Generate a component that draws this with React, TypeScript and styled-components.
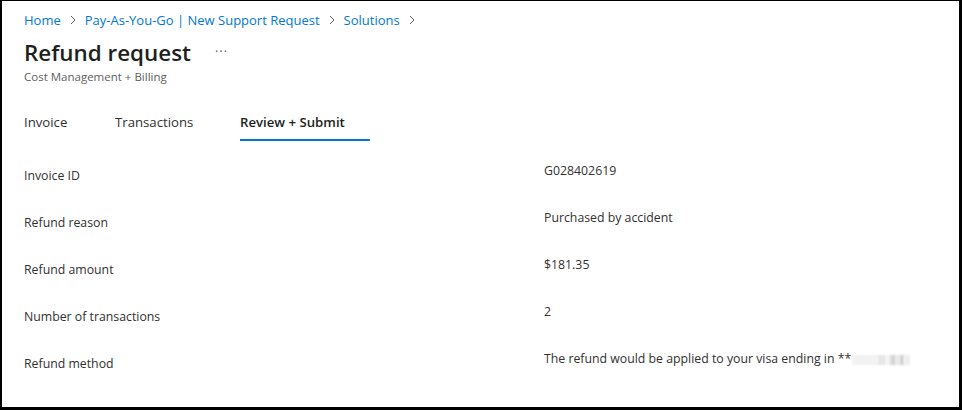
import React from "react";
import styled, { createGlobalStyle } from "styled-components";

const Global = createGlobalStyle`
  html, body { margin: 0; padding: 0; background: #fff; }
  body { font-family: "Segoe UI", "Open Sans", "Noto Sans", sans-serif; color: #323130; }
  * { box-sizing: border-box; }
`;

const Frame = styled.div`
  width: 962px;
  height: 410px;
  border-style: solid;
  border-color: #000;
  border-width: 1px 3px 3px 2px;
  padding: 9px 0 0 22px;
  display: flex;
  flex-direction: column;
  overflow: hidden;
`;

const Breadcrumb = styled.nav`
  display: flex;
  align-items: center;
  gap: 6px;
  height: 20px;
  font-size: 13px;
`;

const Crumb = styled.a`
  color: #0078d4;
  text-decoration: none;
`;

const Chevron = styled.svg`
  width: 8px;
  height: 10px;
  margin: 0 2px;
`;

const TitleRow = styled.div`
  display: flex;
  align-items: center;
  margin-top: 10px;
  height: 26px;
`;

const Title = styled.h1`
  margin: 0;
  font-size: 22.4px;
  font-weight: 600;
  color: #201f1e;
  line-height: 26px;
`;

const More = styled.span`
  margin-left: 24px;
  font-size: 13px;
  color: #605e5c;
  letter-spacing: 1px;
  line-height: 1;
  margin-top: -4px;
`;

const Subtitle = styled.div`
  font-size: 11.5px;
  color: #605e5c;
  margin-top: 3px;
  height: 16px;
`;

const Tabs = styled.div`
  display: flex;
  margin-top: 24px;
  height: 42px;
`;

const Tab = styled.div<{ $active?: boolean; $w: number }>`
  width: ${(p) => p.$w}px;
  font-size: 13.2px;
  font-weight: ${(p) => (p.$active ? 600 : 400)};
  color: ${(p) => (p.$active ? "#201f1e" : "#323130")};
  position: relative;
  padding-top: 4px;
  &::after {
    content: "";
    display: ${(p) => (p.$active ? "block" : "none")};
    position: absolute;
    left: 0;
    top: 30px;
    width: 130px;
    height: 2px;
    background: #0078d4;
  }
`;

const Rows = styled.div`
  display: flex;
  flex-direction: column;
  margin-top: 11px;
`;

const Row = styled.div`
  display: grid;
  grid-template-columns: 520px 1fr;
  height: 47px;
`;

const Label = styled.div`
  font-size: 12.3px;
  color: #323130;
  padding-top: 5px;
`;

const Value = styled.div`
  font-size: 12.3px;
  color: #323130;
`;

const Masked = styled.span`
  display: inline-flex;
  align-items: center;
  vertical-align: middle;
  margin-left: 1px;
`;

const Blur = styled.span<{ $w: number; $c: string }>`
  display: inline-block;
  width: ${(p) => p.$w}px;
  height: 10px;
  background: ${(p) => p.$c};
  filter: blur(1px);
`;

const ChevronIcon = () => (
  <Chevron viewBox="0 0 8 10">
    <path d="M2 1 L6 5 L2 9" fill="none" stroke="#605e5c" strokeWidth="1" />
  </Chevron>
);

const rows: [string, React.ReactNode][] = [
  ["Invoice ID", "G028402619"],
  ["Refund reason", "Purchased by accident"],
  ["Refund amount", "$181.35"],
  ["Number of transactions", "2"],
  [
    "Refund method",
    <>
      The refund would be applied to your visa ending in **
      <Masked>
        <Blur $w={26} $c="#f2f2f2" />
        <Blur $w={8} $c="#e6e6e6" />
        <Blur $w={4} $c="#f4f4f4" />
        <Blur $w={6} $c="#d6d6d6" />
        <Blur $w={4} $c="#e8e8e8" />
        <Blur $w={4} $c="#cfcfcf" />
        <Blur $w={6} $c="#eeeeee" />
      </Masked>
    </>,
  ],
];

export default function App() {
  return (
    <>
      <Global />
      <Frame>
        <Breadcrumb>
          <Crumb>Home</Crumb>
          <ChevronIcon />
          <Crumb>Pay-As-You-Go | New Support Request</Crumb>
          <ChevronIcon />
          <Crumb>Solutions</Crumb>
          <ChevronIcon />
        </Breadcrumb>
        <TitleRow>
          <Title>Refund request</Title>
          <More>···</More>
        </TitleRow>
        <Subtitle>Cost Management + Billing</Subtitle>
        <Tabs>
          <Tab $w={91}>Invoice</Tab>
          <Tab $w={125}>Transactions</Tab>
          <Tab $w={130} $active>Review + Submit</Tab>
        </Tabs>
        <Rows>
          {rows.map(([l, v]) => (
            <Row key={l}>
              <Label>{l}</Label>
              <Value>{v}</Value>
            </Row>
          ))}
        </Rows>
      </Frame>
    </>
  );
}
